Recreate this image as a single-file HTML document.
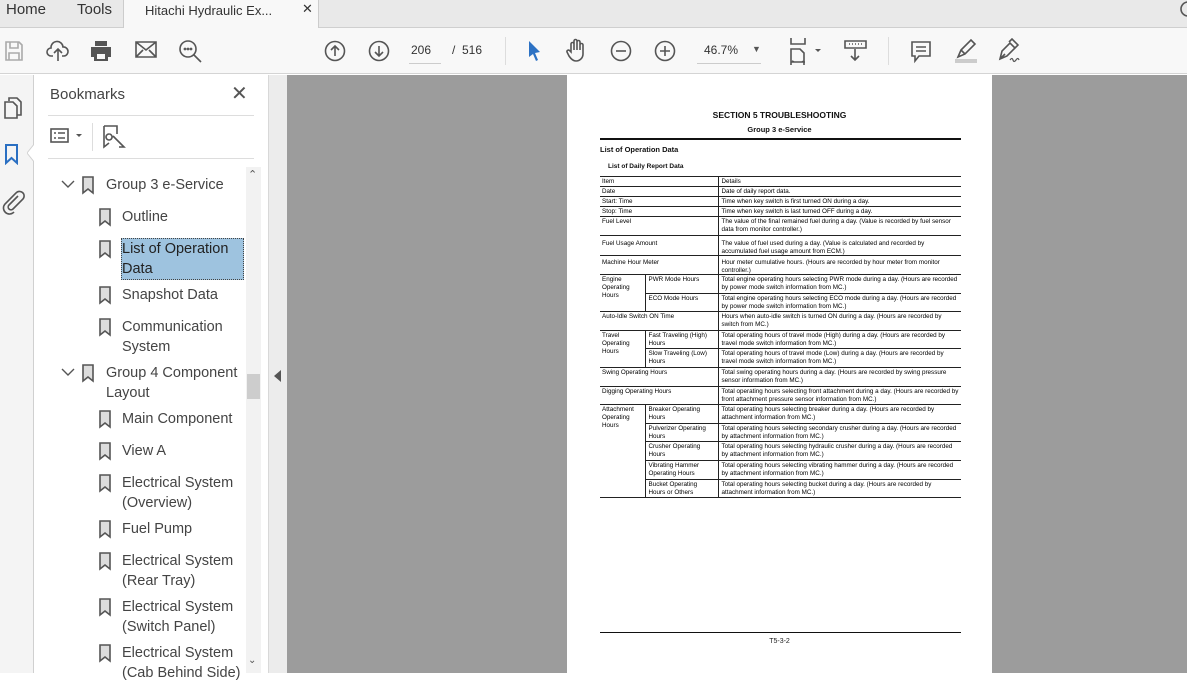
<!DOCTYPE html>
<html><head><meta charset="utf-8"><style>
*{margin:0;padding:0;box-sizing:border-box}
body{width:1187px;height:673px;overflow:hidden;font-family:"Liberation Sans",sans-serif;background:#fff;position:relative;color:#333}
.abs{position:absolute}
#tabs{left:0;top:0;width:1187px;height:28px;background:#e9e9e9;border-bottom:1px solid #cfcfcf}
#tb{left:0;top:28px;width:1187px;height:46px;background:#f8f8f8;border-bottom:1px solid #d4d4d4}
.ic{position:absolute;stroke:#555;fill:none;stroke-width:1.6}
#rail{left:0;top:75px;width:34px;height:598px;background:#f4f4f4;border-right:1px solid #d0d0d0}
#panel{left:34px;top:75px;width:234px;height:598px;background:#fff}
#gap{left:268px;top:75px;width:19px;height:598px;background:#ececec;border-left:1px solid #d8d8d8}
#doc{left:287px;top:75px;width:900px;height:598px;background:#9c9c9c}
#page{left:567px;top:75px;width:425px;height:598px;background:#fff}
.bm{position:absolute;font-size:14.5px;line-height:20px;color:#444}
td{border-top:1px solid #222;font-size:6.3px;line-height:7.6px;vertical-align:top;padding:1px 2px 0;color:#000;font-family:"Liberation Sans",sans-serif}
td.d{border-left:1px solid #222;padding-left:3px}
table{border-collapse:collapse;position:absolute;left:600px;top:176px;width:361px;border-bottom:1px solid #222}
</style></head><body>
<div id="tabs" class="abs">
 <div class="abs" style="left:6px;top:1px;font-size:15px;color:#333">Home</div>
 <div class="abs" style="left:77px;top:1px;font-size:15px;color:#333">Tools</div>
 <div class="abs" style="left:123px;top:0;width:196px;height:29px;background:#f8f8f8;border-left:1px solid #ccc;border-right:1px solid #ccc"></div>
 <div class="abs" style="left:145px;top:3px;font-size:13px;color:#333">Hitachi Hydraulic Ex...</div>
 <div class="abs" style="left:302px;top:1px;font-size:13px;color:#333">✕</div>
 <svg class="ic" style="left:1178px;top:0" width="12" height="18"><circle cx="10" cy="9" r="7"/></svg>
</div>
<div id="tb" class="abs">
 <svg class="ic" style="left:4px;top:12px;stroke:#aaa" width="20" height="22"><path d="M2 2h13l3 3v15H2z M6 2v6h8V2 M5 13h10v7H5z"/></svg>
 <svg class="ic" style="left:46px;top:11px" width="24" height="24"><path d="M7 17H5a4 4 0 0 1 0-8 6 6 0 0 1 12-1 4.5 4.5 0 0 1 1 9h-2 M12 22V11 M8 14l4-4 4 4"/></svg>
 <svg class="ic" style="left:89px;top:11px;fill:#555;stroke:none" width="24" height="24"><path d="M6 2h12v5H6z M2 8h20v10h-3v4H5v-4H2z"/><rect x="8" y="15" width="8" height="5" fill="#f8f8f8"/></svg>
 <svg class="ic" style="left:135px;top:13px" width="22" height="18"><path d="M1 1h20v15H1z M1 1l10 8 10-8 M1 16l7-7 M21 16l-7-7"/></svg>
 <svg class="ic" style="left:178px;top:11px" width="26" height="26"><circle cx="10" cy="10" r="8"/><path d="M16 16l7 7"/><circle cx="7" cy="10" r=".6"/><circle cx="10" cy="10" r=".6"/><circle cx="13" cy="10" r=".6"/></svg>
 <svg class="ic" style="left:324px;top:12px" width="22" height="22"><circle cx="11" cy="11" r="9.5"/><path d="M11 16V6 M7 10l4-4 4 4"/></svg>
 <svg class="ic" style="left:368px;top:12px" width="22" height="22"><circle cx="11" cy="11" r="9.5"/><path d="M11 6v10 M7 12l4 4 4-4"/></svg>
 <div class="abs" style="left:411px;top:15px;font-size:12px;color:#333">206</div>
 <div class="abs" style="left:409px;top:35px;width:32px;height:1px;background:#ccc"></div>
 <div class="abs" style="left:452px;top:15px;font-size:12px;color:#333">/ &nbsp;516</div>
 <div class="abs" style="left:505px;top:9px;width:1px;height:28px;background:#ddd"></div>
 <svg class="abs" style="left:527px;top:12px" width="16" height="22"><path d="M2 1l11 11-5 1 3 7-2 1-3-7-4 3z" fill="#2d72c4"/></svg>
 <svg class="ic" style="left:565px;top:10px" width="24" height="26"><path d="M6 14V6a1.5 1.5 0 0 1 3 0v6V3a1.5 1.5 0 0 1 3 0v9V4a1.5 1.5 0 0 1 3 0v8V7a1.5 1.5 0 0 1 3 0v9a7 7 0 0 1-7 7c-3 0-5-2-7-5l-2-4a1.5 1.5 0 0 1 2.5-1.5z"/></svg>
 <svg class="ic" style="left:610px;top:12px" width="22" height="22"><circle cx="11" cy="11" r="9.5"/><path d="M6 11h10"/></svg>
 <svg class="ic" style="left:654px;top:12px" width="22" height="22"><circle cx="11" cy="11" r="9.5"/><path d="M6 11h10 M11 6v10"/></svg>
 <div class="abs" style="left:704px;top:15px;font-size:12px;color:#333">46.7%</div>
 <div class="abs" style="left:752px;top:16px;font-size:9px;color:#555">▼</div>
 <div class="abs" style="left:697px;top:35px;width:64px;height:1px;background:#ccc"></div>
 <svg class="ic" style="left:788px;top:9px" width="36" height="28"><path d="M3 1v6h14V1 M3 28V12h9l4 4v12 M3 25h14 M6 25l-2-1 M14 25l2-1"/><path d="M27 12l3 3 3-3z" fill="#555" stroke="none"/></svg>
 <svg class="ic" style="left:843px;top:11px" width="26" height="24"><path d="M2 2h21v7H2z M12 10v11 M8 17l4 4 4-4"/><path d="M6 5h1M9 5h1M12 5h1M15 5h1M18 5h1" stroke-width="1.5"/></svg>
 <div class="abs" style="left:888px;top:9px;width:1px;height:28px;background:#ddd"></div>
 <svg class="ic" style="left:910px;top:12px" width="22" height="24"><path d="M2 2h18v14H9l-4 5v-5H2z M6 7h10 M6 11h10"/></svg>
 <svg class="ic" style="left:952px;top:10px" width="26" height="26"><path d="M6 19l3-7 10-10 4 4-10 10z M9 12l4 4"/><rect x="3" y="21" width="22" height="4" fill="#ccc" stroke="none"/></svg>
 <svg class="ic" style="left:996px;top:10px" width="26" height="26"><path d="M4 21l2-8 8-8 5 5-8 8z M13 4l3-3 6 6-3 3 M4 21l5-5"/><path d="M14 22q2-3 3 0t3 0 3 0" stroke-width="1.2"/></svg>
</div>
<div id="rail" class="abs">
 <svg class="ic" style="left:3px;top:21px" width="20" height="24"><path d="M6 5V2h8l4 4v13h-4 M2 6h8l4 4v12H2z"/></svg>
 <svg class="ic" style="left:4px;top:68px;stroke:#2a6fc2;stroke-width:2" width="16" height="22"><path d="M2 2h11v18l-5.5-5L2 20z"/></svg>
 <svg class="ic" style="left:0px;top:114px" width="26" height="26"><path d="M18 7l-9 9a2.5 2.5 0 0 0 4 4l10-10a4.5 4.5 0 0 0-7-6L5 15a6 6 0 0 0 9 8"/></svg>
 <svg class="abs" style="left:27px;top:68px" width="8" height="20"><path d="M8 0L0 10l8 10" fill="#fff" stroke="#d0d0d0"/></svg>
</div>
<div id="panel" class="abs">
 <div class="abs" style="left:16px;top:11px;font-size:15px;color:#444">Bookmarks</div>
 <div class="abs" style="left:197px;top:6px;font-size:20px;color:#555">✕</div>
 <div class="abs" style="left:14px;top:40px;width:206px;height:1px;background:#ddd"></div>
 <svg class="ic" style="left:16px;top:53px" width="36" height="16"><rect x="1" y="1" width="17" height="13"/><path d="M4 5h2M4 10h2M8 5h7M8 10h7"/><path d="M26 6l3 3 3-3z" fill="#555" stroke="none"/></svg>
 <div class="abs" style="left:58px;top:48px;width:1px;height:28px;background:#ddd"></div>
 <svg class="ic" style="left:68px;top:49px" width="24" height="26"><path d="M2 2h13v8 M2 2v21l5-4 M7 10a3 3 0 1 0 .1 0 M11 12l11 11-5 0"/></svg>
 <div class="abs" style="left:14px;top:83px;width:206px;height:1px;background:#ddd"></div>
 <div class="abs" style="left:212px;top:92px;width:15px;height:506px;background:#f2f2f2"></div>
 <div class="abs" style="left:213px;top:299px;width:13px;height:25px;background:#cdcdcd"></div>
 <div class="abs" style="left:214px;top:93px;font-size:11px;color:#555">⌃</div>
 <div class="abs" style="left:214px;top:580px;font-size:10px;color:#555">⌄</div>
 <div class="abs" style="left:87px;top:163px;width:123px;height:42px;background:#9ec3df;border:1px dotted #444"></div>
 <div class="bm" style="left:72px;top:100px">Group 3 e-Service</div>
 <div class="bm" style="left:88px;top:132px">Outline</div>
 <div class="bm" style="left:88px;top:164px;color:#222">List of Operation<br>Data</div>
 <div class="bm" style="left:88px;top:210px">Snapshot Data</div>
 <div class="bm" style="left:88px;top:242px">Communication<br>System</div>
 <div class="bm" style="left:72px;top:288px">Group 4 Component<br>Layout</div>
 <div class="bm" style="left:88px;top:334px">Main Component</div>
 <div class="bm" style="left:88px;top:366px">View A</div>
 <div class="bm" style="left:88px;top:398px">Electrical System<br>(Overview)</div>
 <div class="bm" style="left:88px;top:444px">Fuel Pump</div>
 <div class="bm" style="left:88px;top:476px">Electrical System<br>(Rear Tray)</div>
 <div class="bm" style="left:88px;top:522px">Electrical System<br>(Switch Panel)</div>
 <div class="bm" style="left:88px;top:568px">Electrical System<br>(Cab Behind Side)</div>
 <svg class="ic" style="left:0;top:0" width="110" height="598">
  <path d="M28 106l6 6 6-6 M28 294l6 6 6-6" stroke-width="1.4"/>
  <g fill="#ddd" stroke="#555" stroke-width="1.6">
   <path d="M49 102h10v16l-5-4-5 4z"/><path d="M49 290h10v16l-5-4-5 4z"/>
   <path d="M66 134h10v16l-5-4-5 4z"/><path d="M66 166h10v16l-5-4-5 4z"/><path d="M66 212h10v16l-5-4-5 4z"/>
   <path d="M66 244h10v16l-5-4-5 4z"/><path d="M66 336h10v16l-5-4-5 4z"/><path d="M66 368h10v16l-5-4-5 4z"/>
   <path d="M66 400h10v16l-5-4-5 4z"/><path d="M66 446h10v16l-5-4-5 4z"/><path d="M66 478h10v16l-5-4-5 4z"/>
   <path d="M66 524h10v16l-5-4-5 4z"/><path d="M66 570h10v16l-5-4-5 4z"/>
  </g>
 </svg>
</div>
<div id="gap" class="abs"><svg class="abs" style="left:5px;top:295px" width="8" height="12"><path d="M7 0L0 6l7 6z" fill="#555"/></svg></div>
<div id="doc" class="abs"></div>
<div id="page" class="abs">
 <div class="abs" style="left:0;top:35px;width:425px;text-align:center;font-size:8.5px;font-weight:bold;color:#111">SECTION 5 TROUBLESHOOTING</div>
 <div class="abs" style="left:0;top:50px;width:425px;text-align:center;font-size:7.5px;font-weight:bold;color:#111">Group 3 e-Service</div>
 <div class="abs" style="left:33px;top:63px;width:361px;height:2px;background:#111"></div>
 <div class="abs" style="left:33px;top:70px;font-size:7.5px;font-weight:bold;color:#111">List of Operation Data</div>
 <div class="abs" style="left:41px;top:88px;font-size:6.5px;font-weight:bold;color:#111">List of Daily Report Data</div>
 <div class="abs" style="left:33px;top:557px;width:361px;height:1px;background:#111"></div>
 <div class="abs" style="left:0;top:563px;width:425px;text-align:center;font-size:7px;color:#222">T5-3-2</div>
</div>
<table>
<colgroup><col style="width:45px"><col style="width:73px"><col></colgroup>
<tr style="height:10px"><td colspan="2">Item</td><td class="d">Details</td></tr>
<tr style="height:10px"><td colspan="2">Date</td><td class="d">Date of daily report data.</td></tr>
<tr style="height:10px"><td colspan="2">Start: Time</td><td class="d">Time when key switch is first turned ON during a day.</td></tr>
<tr style="height:10px"><td colspan="2">Stop: Time</td><td class="d">Time when key switch is last turned OFF during a day.</td></tr>
<tr style="height:19px"><td colspan="2">Fuel Level</td><td class="d">The value of the final remained fuel during a day. (Value is recorded by fuel sensor data from monitor controller.)</td></tr>
<tr style="height:19px"><td colspan="2" style="padding-top:4px">Fuel Usage Amount</td><td class="d" style="padding-top:4px">The value of fuel used during a day. (Value is calculated and recorded by accumulated fuel usage amount from ECM.)</td></tr>
<tr style="height:19px"><td colspan="2" style="padding-top:3px">Machine Hour Meter</td><td class="d" style="padding-top:3px">Hour meter cumulative hours. (Hours are recorded by hour meter from monitor controller.)</td></tr>
<tr style="height:19px"><td rowspan="2">Engine Operating Hours</td><td class="d">PWR Mode Hours</td><td class="d">Total engine operating hours selecting PWR mode during a day. (Hours are recorded by power mode switch information from MC.)</td></tr>
<tr style="height:18px"><td class="d">ECO Mode Hours</td><td class="d">Total engine operating hours selecting ECO mode during a day. (Hours are recorded by power mode switch information from MC.)</td></tr>
<tr style="height:19px"><td colspan="2">Auto-Idle Switch ON Time</td><td class="d">Hours when auto-idle switch is turned ON during a day. (Hours are recorded by switch from MC.)</td></tr>
<tr style="height:18px"><td rowspan="2">Travel Operating Hours</td><td class="d">Fast Traveling (High) Hours</td><td class="d">Total operating hours of travel mode (High) during a day. (Hours are recorded by travel mode switch information from MC.)</td></tr>
<tr style="height:19px"><td class="d">Slow Traveling (Low) Hours</td><td class="d">Total operating hours of travel mode (Low) during a day. (Hours are recorded by travel mode switch information from MC.)</td></tr>
<tr style="height:19px"><td colspan="2">Swing Operating Hours</td><td class="d">Total swing operating hours during a day. (Hours are recorded by swing pressure sensor information from MC.)</td></tr>
<tr style="height:18px"><td colspan="2">Digging Operating Hours</td><td class="d">Total operating hours selecting front attachment during a day. (Hours are recorded by front attachment pressure sensor information from MC.)</td></tr>
<tr style="height:19px"><td rowspan="5">Attachment Operating Hours</td><td class="d">Breaker Operating Hours</td><td class="d">Total operating hours selecting breaker during a day. (Hours are recorded by attachment information from MC.)</td></tr>
<tr style="height:18px"><td class="d">Pulverizer Operating Hours</td><td class="d">Total operating hours selecting secondary crusher during a day. (Hours are recorded by attachment information from MC.)</td></tr>
<tr style="height:19px"><td class="d">Crusher Operating Hours</td><td class="d">Total operating hours selecting hydraulic crusher during a day. (Hours are recorded by attachment information from MC.)</td></tr>
<tr style="height:19px"><td class="d">Vibrating Hammer Operating Hours</td><td class="d">Total operating hours selecting vibrating hammer during a day. (Hours are recorded by attachment information from MC.)</td></tr>
<tr style="height:18px"><td class="d">Bucket Operating Hours or Others</td><td class="d">Total operating hours selecting bucket during a day. (Hours are recorded by attachment information from MC.)</td></tr>
</table>
</body></html>
